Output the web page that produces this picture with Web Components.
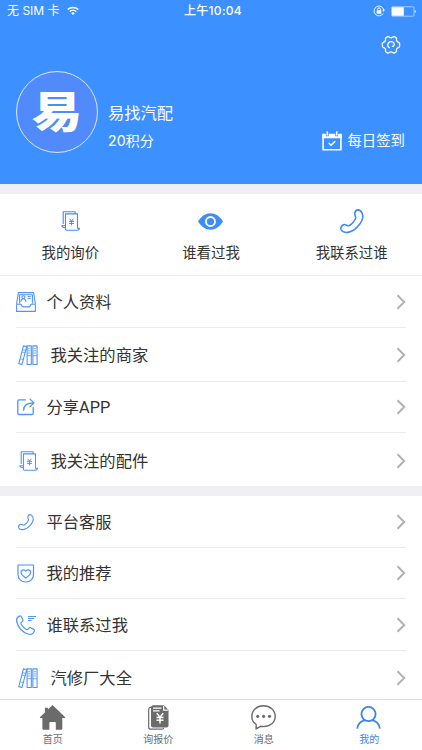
<!DOCTYPE html>
<html lang="zh-CN">
<head>
<meta charset="utf-8">
<meta name="viewport" content="width=device-width, initial-scale=1">
<title>我的</title>
<style>
  html, body {
    margin: 0;
    height: 100%;
    background: #fff;
  }
  body {
    font-family: Inter, "Noto Sans CJK SC", sans-serif;
    color: #333;
    overflow: hidden;
  }
</style>
</head>
<body>
<profile-page>
  <status-bar slot="top" carrier="无 SIM 卡" time="上午10:04"></status-bar>
  <user-header slot="top" name="易找汽配" points="20积分" avatar="易">每日签到</user-header>

  <quick-links>
    <quick-link icon="receipt">我的询价</quick-link>
    <quick-link icon="eye">谁看过我</quick-link>
    <quick-link icon="phone">我联系过谁</quick-link>
  </quick-links>

  <menu-group>
    <menu-row icon="profile" style="height: 52px">个人资料</menu-row>
    <menu-row icon="books" wide style="height: 54px">我关注的商家</menu-row>
    <menu-row icon="share" style="height: 51px">分享APP</menu-row>
    <menu-row icon="receipt" wide style="height: 53px; --shift: 3px">我关注的配件</menu-row>
  </menu-group>

  <menu-group>
    <menu-row icon="handset" style="height: 52px">平台客服</menu-row>
    <menu-row icon="shield" style="height: 51px">我的推荐</menu-row>
    <menu-row icon="calls" style="height: 52px">谁联系过我</menu-row>
    <menu-row icon="books" wide style="height: 54px">汽修厂大全</menu-row>
  </menu-group>

  <tab-bar slot="bottom">
    <tab-item icon="home">首页</tab-item>
    <tab-item icon="quote">询报价</tab-item>
    <tab-item icon="chat">消息</tab-item>
    <tab-item icon="user" active>我的</tab-item>
  </tab-bar>
</profile-page>

<script>
const HANDSET = `<path d="M14.800 4.200c.3-1.700 1.500-3.200 3.200-3.300 1.900 0 3.300 1.400 4.200 3.400 1.300 3.200.4 7-2.200 10.400-3 4.200-6.500 7.300-11 8.400-3.600.8-7-.4-8-2.600-.8-1.900.7-4.500 3-4.900 2-.3 2.800 1.400 4.600 1.200 1.400-.2 2.700-1.400 4.200-3.100 1.600-1.800 2.700-3.400 2.900-4.700.2-1.800-1.300-2.500-.9-4.800z"/>`;

// [width, height, viewBox, markup]
const ICONS = {
  wifi: [12, 9.5, "0 0 13 10", `<g fill="none" stroke="currentColor" stroke-width="1.6"><path d="M.8 3.700a8.200 8.200 0 0 1 11.400 0"/><path d="M3 6a5 5 0 0 1 7 0"/></g><path fill="currentColor" d="M6.500 9.600 4.600 7.700a2.700 2.700 0 0 1 3.800 0z"/>`],
  lock: [12, 12, "0 0 12 12", `<path fill="none" stroke="currentColor" stroke-width=".9" d="M10.200 8.500A4.900 4.900 0 1 1 10.800 5"/><path fill="currentColor" d="M9.200 4.800h2.800l-1.400 2z"/><rect x="3.700" y="5.300" width="4.600" height="3.400" rx=".4" fill="currentColor"/><path fill="none" stroke="currentColor" stroke-width=".9" d="M4.600 5.500V4.300a1.400 1.400 0 0 1 2.800 0v1.200"/>`],
  battery: [26, 11, "0 0 26 11", `<rect x=".6" y=".8" width="22.400" height="9.400" rx="1" fill="none" stroke="currentColor" stroke-width=".7" opacity=".75"/><path fill="currentColor" d="M1 1.200h11.800v8.600H1zM23.800 4c1.300.2 1.300 2.800 0 3z"/>`],
  gear: [20, 20, "0 0 20 20", `<g fill="none" stroke="currentColor" stroke-width="1.300" stroke-linejoin="round" stroke-linecap="round"><path d="M6.500 1.700C8 1.200 8.300 2.800 10 2.800s2-1.600 3.500-1.100l1.500.9c1 .8 0 2 .7 3.300s2.500 1 2.900 2.300v3.200c-.4 1.400-2.200 1.100-2.900 2.400s.3 2.500-.7 3.300l-1.500.8c-1.500.6-1.800-1-3.500-1s-2 1.600-3.500 1L5 17.100c-1-.8 0-2-.7-3.300s-2.500-1-2.900-2.400V8.200C1.800 6.900 3.600 7.200 4.300 5.900S4 3.400 5 2.600z"/><path d="M8.300 12.700a3.300 3.300 0 1 1 5-3.200M11.300 11.200c.8.300 1.700 0 2-1.700"/></g>`],
  calendar: [20, 20, "0 0 20 20", `<path fill="none" stroke="currentColor" stroke-width="1.600" d="M1.100 3.800V18.800h17.800V3.800"/><path fill="currentColor" d="M.3 2.700h3.500v2.600h3V2.700h6.400v2.600h3V2.700h3.500v4.500H.3zM4.500.3h1.600v4.200H4.500zM13.900.3h1.600v4.200h-1.600z"/><path fill="none" stroke="currentColor" stroke-width="1.500" d="m6.700 12 2.300 2.300 4.200-4.100"/>`],
  receipt: [19, 20, "0 0 19 20", `<g fill="none" stroke="currentColor" stroke-width="1.100" stroke-linejoin="round"><path d="M2.200 13V.8h12v2.100M4.500 18.300V2.900h12v11.600M4.500 14.800H.8c.2 1.500 1.200 1.900 3.700 1.900M4.500 18.300c0 .5.500.9 1 .9h11c1 0 1.800-.7 2-1.900h-2v-3"/></g><path fill="none" stroke="currentColor" stroke-width="1" d="m8.600 7.800 1.900 2.300 1.900-2.300M8 10.400h5M8 12.400h5M10.500 10v4.400"/>`],
  eye: [25, 17, "0 0 26 17", `<path fill="currentColor" d="M0 8.500C3.500 3 8 0 13 0s9.500 3 13 8.500C22.500 14 18 17 13 17S3.500 14 0 8.500z"/><circle cx="13" cy="8.500" r="4.700" fill="none" stroke="#fff" stroke-width="1.900"/>`],
  phone: [24, 24, "0 0 24 24", `<g fill="none" stroke="currentColor" stroke-width="1.600">${HANDSET}</g>`],
  handset: [16, 16, "0 0 24 24", `<g fill="none" stroke="currentColor" stroke-width="1.700">${HANDSET}</g>`],
  profile: [20, 20, "0 0 20 20", `<g fill="none" stroke="currentColor" stroke-width="1.100" stroke-linejoin="round"><path d="M.6 12.200h4.500c.4 2 .9 2.700 2 2.700h5.800c1.100 0 1.600-.7 2-2.700h4.500v7.200H.6zM.6 12.200 2.400 .6h15.200l1.800 11.600M3.600 11.500V2.700h12.800v8.800"/><circle cx="7.400" cy="5.200" r="1.500"/><path d="M4.900 9.800c.1-2 1-3 2.500-3s2.400 1 2.500 3M11.600 4.500h3.100M11.600 6.500h3.100"/></g>`],
  books: [20, 20, "0 0 20 20.500", `<g fill="none" stroke="currentColor" stroke-width="1.100" stroke-linejoin="round"><path d="M5.300.9 8.600 1.600 3.900 19.900.6 19.100zM9.100.9h4.300v19H9.100zM15 .9h4.300v19H15z"/><path stroke-width=".8" d="m4.500 4.800 3.300.8M3.900 7.200l3.300.8M2.100 14.200l3.200.8M10 3.800h2.500M10 6h2.500M10 8.200h2.500M9.100 11h4.300M15.900 3.800h2.500M15.900 6h2.500M15.900 8.200h2.500M15 11h4.300"/></g>`],
  share: [18, 18, "0 0 18 18", `<path fill="none" stroke="currentColor" stroke-width="1.300" stroke-linejoin="round" stroke-linecap="round" d="M8.300 1.900H2.100C1.300 1.900.8 2.400.8 3.200v12c0 .8.500 1.300 1.300 1.300h12.800c.8 0 1.300-.5 1.300-1.300V9.400M6.600 12.200c0-4.700 2.400-7.300 10-7.300M13 1.100l4 3.800-4 3.800"/>`],
  shield: [17.5, 19, "0 0 17.5 19", `<g fill="none" stroke="currentColor" stroke-width="1.200" stroke-linejoin="round"><path d="M1 1h15.500v9.500c0 4.500-3.300 7.500-7.750 7.500S1 15 1 10.500z"/><path d="M8.800 13.900C5.700 11.800 4 10.300 4 8.400c0-2.700 3.500-3.500 4.800-1.100 1.300-2.400 4.800-1.600 4.800 1.100 0 1.900-1.700 3.400-4.800 5.500z"/></g>`],
  calls: [20, 20, "0 0 20 20", `<g fill="none" stroke="currentColor" stroke-width="1.200" stroke-linejoin="round" stroke-linecap="round"><path d="m2 1.900 1.500-.8c.7-.4 1.400-.1 1.800.5l1.500 3c.4.8.1 1.500-.5 2l-1 .8c-.5.500-.5 1-.2 1.600 1.300 2.500 3.100 4.300 5.400 5.500.6.300 1.100.2 1.500-.3l.9-1c.5-.6 1.200-.7 1.900-.4l3 1.600c.7.400.9 1.100.5 1.800l-.8 1.400c-1.100 1.800-3.300 2.200-5.700 1.400C6.300 17.200 1.900 12.100.8 7 .3 4.800.5 3 2 1.900z"/><path d="M12 1.500h8M12 3.500h6.100M12 5.500h3.500" stroke-width="1" stroke-linecap="butt"/></g>`],
  chevron: [10, 16, "0 0 10 16", `<path fill="none" stroke="currentColor" stroke-width="2" d="m1.500 1.300 6.700 6.700-6.700 6.700"/>`],
  home: [25, 25, "0 0 25 25", `<path fill="currentColor" d="M12.500 0 25 12.100c.4.500.2.900-.4.900h-2.300v10.500c0 .9-.4 1.300-1.300 1.300h-5.200v-6.700c0-.8-.4-1.200-1.200-1.200h-4c-.8 0-1.200.4-1.200 1.200v6.700H3.700c-.9 0-1.300-.4-1.300-1.300V13H.4c-.6 0-.7-.4-.3-.9L4.900 7.500V2.700h3v1.900z"/>`],
  quote: [21, 25, "0 0 21 25", `<path fill="none" stroke="currentColor" stroke-width="1.200" d="M3 2.200C1.500 2.500.7 3 .7 4.200v18c0 1.300.7 2 2 2H14c1 0 1.600-.5 1.900-1.300"/><path fill="currentColor" d="M5.200.2H16L20.500 5v15.300c0 1.400-.8 2.200-2.200 2.200H5.200c-1.400 0-2.200-.8-2.200-2.200V2.400C3 1 3.800.2 5.200.2z"/><path fill="none" stroke="#fff" stroke-width="1.200" d="M5 3.100h8.500M5 5.900h6.500M15.700.8v4.300h4.500"/><path fill="none" stroke="#fff" stroke-width="1.500" d="m8.800 8.300 3.200 4 3.200-4M8.500 12.600h7M8.500 15.300h7M12 12v6.500"/>`],
  chat: [25, 25, "0 0 25 25", `<path fill="none" stroke="currentColor" stroke-width="1.400" stroke-linejoin="round" d="M5.200 19.500C2.500 17.600.8 14.700.8 11.400.8 5.400 6 .8 12.500.8s11.700 4.600 11.700 10.600S19 21.600 12.500 21.600c-1 0-2-.1-2.800-.3L5.100 23.900z"/><g fill="currentColor"><circle cx="6.700" cy="11.300" r="1.600"/><circle cx="12.600" cy="11.300" r="1.600"/><circle cx="18.500" cy="11.300" r="1.600"/></g>`],
  user: [26, 23, "0.500 0 26 24", `<g fill="none" stroke="currentColor" stroke-width="1.900"><circle cx="13" cy="8.400" r="7.400"/><path d="M1.200 23.500c.8-5 3.800-7.700 8.200-8.700M24.800 23.500c-.8-5-3.800-7.700-8.200-8.700"/></g>`]
};

class AppIcon extends HTMLElement {
  connectedCallback() {
    if (!this.shadowRoot) this.attachShadow({ mode: "open" });
    const [w, h, box, body] = ICONS[this.getAttribute("name")];
    this.shadowRoot.innerHTML = `
      <style>
        :host { display: inline-flex; flex: none; }
        svg { display: block; overflow: visible; }
      </style>
      <svg width="${w}" height="${h}" viewBox="${box}" aria-hidden="true">${body}</svg>
    `;
  }
}

class ProfilePage extends HTMLElement {
  constructor() {
    super();
    this.attachShadow({ mode: "open" }).innerHTML = `
      <style>
        :host {
          display: flex;
          flex-direction: column;
          height: 100vh;
          background: #efeff4;
        }
        .top { flex: none; background: #3d90ff; color: #fff; height: 184px; }
        .content {
          flex: 1;
          min-height: 0;
          overflow: hidden;
          padding-top: 10px;
        }
      </style>
      <div class="top"><slot name="top"></slot></div>
      <div class="content"><slot></slot></div>
      <slot name="bottom"></slot>
    `;
  }
}

class StatusBar extends HTMLElement {
  connectedCallback() {
    if (!this.shadowRoot) this.attachShadow({ mode: "open" });
    this.shadowRoot.innerHTML = `
      <style>
        :host {
          display: grid;
          grid-template-columns: 1fr auto 1fr;
          align-items: center;
          height: 22px;
          padding: 0 5px 0 7px;
          font-size: 12px;
          line-height: 22px;
        }
        .left, .right { display: flex; align-items: center; }
        .left { gap: 7px; }
        .right { justify-content: flex-end; gap: 6px; }
        .time { font-weight: 500; letter-spacing: 0.3px; padding-left: 2px; }
      </style>
      <div class="left"><span>${this.getAttribute("carrier")}</span><app-icon name="wifi"></app-icon></div>
      <div class="time">${this.getAttribute("time")}</div>
      <div class="right"><app-icon name="lock"></app-icon><app-icon name="battery"></app-icon></div>
    `;
  }
}

class UserHeader extends HTMLElement {
  connectedCallback() {
    if (!this.shadowRoot) this.attachShadow({ mode: "open" });
    this.shadowRoot.innerHTML = `
      <style>
        :host { display: block; padding: 13px 16px 0; }
        .settings { display: flex; justify-content: flex-end; padding-right: 5px; }
        .card { display: flex; align-items: flex-start; margin-top: 16px; }
        .avatar {
          box-sizing: border-box;
          display: flex;
          align-items: center;
          justify-content: center;
          width: 82px;
          height: 82px;
          border: 1.300px solid #d9e8ff;
          border-radius: 50%;
          background: #518bfb;
          font: 900 48px/1 "Noto Sans CJK SC", sans-serif;
        }
        .avatar span { transform: translateY(-3.500px) scale(1.05, 0.91); }
        .info { margin-left: 10px; flex: 1; padding-top: 30px; }
        .name { font-size: 16.300px; line-height: 24px; }
        .points { font-size: 14.200px; line-height: 20px; margin-top: 6px; }
        .sign {
          display: flex;
          align-items: center;
          gap: 5px;
          margin-top: 60px;
          font-size: 14.400px;
          line-height: 20px;
          padding-right: 1px;
        }
      </style>
      <div class="settings"><app-icon name="gear"></app-icon></div>
      <div class="card">
        <div class="avatar"><span>${this.getAttribute("avatar")}</span></div>
        <div class="info">
          <div class="name">${this.getAttribute("name")}</div>
          <div class="points">${this.getAttribute("points")}</div>
        </div>
        <div class="sign"><app-icon name="calendar"></app-icon><slot></slot></div>
      </div>
    `;
  }
}

class QuickLinks extends HTMLElement {
  constructor() {
    super();
    this.attachShadow({ mode: "open" }).innerHTML = `
      <style>
        :host {
          box-sizing: border-box;
          display: grid;
          grid-template-columns: repeat(3, 1fr);
          height: 82px;
          background: #fff;
          border-bottom: 1px solid #efeff2;
        }
      </style>
      <slot></slot>
    `;
  }
}

class QuickLink extends HTMLElement {
  connectedCallback() {
    if (!this.shadowRoot) this.attachShadow({ mode: "open" });
    this.shadowRoot.innerHTML = `
      <style>
        :host {
          display: flex;
          flex-direction: column;
          align-items: center;
          padding-top: 12px;
          font-size: 14.400px;
          line-height: 20px;
        }
        .icon { display: flex; align-items: center; height: 30px; color: #3d8df4; margin-bottom: 7px; }
      </style>
      <div class="icon"><app-icon name="${this.getAttribute("icon")}"></app-icon></div>
      <span><slot></slot></span>
    `;
  }
}

class MenuGroup extends HTMLElement {
  constructor() {
    super();
    this.attachShadow({ mode: "open" }).innerHTML = `
      <style>
        :host { display: block; background: #fff; margin-bottom: 10px; }
        ::slotted(:last-child) { --divider: transparent; }
      </style>
      <slot></slot>
    `;
  }
}

class MenuRow extends HTMLElement {
  connectedCallback() {
    if (!this.shadowRoot) this.attachShadow({ mode: "open" });
    this.shadowRoot.innerHTML = `
      <style>
        :host {
          display: block;
          padding: 0 16px;
          font-family: Roboto, "Noto Sans CJK SC", sans-serif;
          font-size: 16.300px;
        }
        .row {
          box-sizing: border-box;
          display: flex;
          align-items: center;
          height: 100%;
          padding-top: var(--shift, 0);
          border-bottom: 1px solid var(--divider, #ebebef);
        }
        .icon { display: flex; justify-content: center; width: 20px; margin-right: 10.500px; color: #4f95f2; }
        :host([wide]) .icon { width: 24px; }
        .label { flex: 1; line-height: 24px; padding-top: 2px; }
        .arrow { color: #b2b2b4; }
      </style>
      <div class="row">
        <div class="icon"><app-icon name="${this.getAttribute("icon")}"></app-icon></div>
        <div class="label"><slot></slot></div>
        <app-icon class="arrow" name="chevron"></app-icon>
      </div>
    `;
  }
}

class TabBar extends HTMLElement {
  constructor() {
    super();
    this.attachShadow({ mode: "open" }).innerHTML = `
      <style>
        :host {
          box-sizing: border-box;
          flex: none;
          display: grid;
          grid-template-columns: repeat(4, 1fr);
          height: 51px;
          background: #fff;
          border-top: 1px solid #dcdcde;
        }
      </style>
      <slot></slot>
    `;
  }
}

class TabItem extends HTMLElement {
  connectedCallback() {
    if (!this.shadowRoot) this.attachShadow({ mode: "open" });
    this.shadowRoot.innerHTML = `
      <style>
        :host {
          display: flex;
          flex-direction: column;
          align-items: center;
          padding-top: 4px;
          font-size: 10px;
          line-height: 14px;
          color: #6b6b6b;
        }
        :host([active]) { color: #3d85e8; }
        .icon { display: flex; align-items: center; height: 27px; margin-bottom: 1px; }
      </style>
      <div class="icon"><app-icon name="${this.getAttribute("icon")}"></app-icon></div>
      <span><slot></slot></span>
    `;
  }
}

customElements.define("app-icon", AppIcon);
customElements.define("profile-page", ProfilePage);
customElements.define("status-bar", StatusBar);
customElements.define("user-header", UserHeader);
customElements.define("quick-links", QuickLinks);
customElements.define("quick-link", QuickLink);
customElements.define("menu-group", MenuGroup);
customElements.define("menu-row", MenuRow);
customElements.define("tab-bar", TabBar);
customElements.define("tab-item", TabItem);
</script>
</body>
</html>
